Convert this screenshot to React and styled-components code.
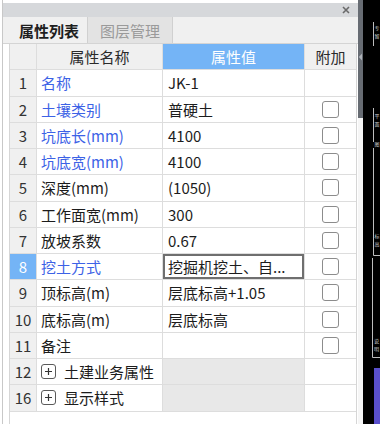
import React from 'react';
import styled, { createGlobalStyle } from 'styled-components';

const Global = createGlobalStyle`
  html, body { margin: 0; padding: 0; background: #fff; }
  body {
    width: 380px; height: 424px; overflow: hidden;
    font-family: "Noto Sans CJK SC", "Microsoft YaHei", "Noto Sans", sans-serif;
  }
  * { box-sizing: border-box; }
`;

const Screen = styled.div`
  display: flex;
  width: 380px;
  height: 424px;
  overflow: hidden;
  background: #fff;
`;

const LeftEdge = styled.div`
  flex: none;
  width: 3px;
  background: #fff;
  border-right: 1px solid #c8c8c8;
`;

const Panel = styled.div`
  flex: none;
  width: 355px;
  display: flex;
  flex-direction: column;
  padding-top: 3px;
  background: #fff;
`;

const TitleBar = styled.div`
  flex: none;
  height: 14px;
  background: #d6d8db;
  display: flex;
  justify-content: flex-end;
  align-items: center;
  padding-right: 8px;
`;

const TabRow = styled.div`
  flex: none;
  height: 27px;
  display: flex;
  background: #f0f0f0;
  border-bottom: 1px solid #d4d4d4;
`;

const Tab = styled.div`
  width: 85px;
  display: flex;
  align-items: center;
  justify-content: center;
  font-size: 15px;
  padding-left: ${p => (p.$active ? '8px' : '0')};
  border-right: 1px solid #d0d0d0;
  background: ${p => (p.$active ? '#f0f0f0' : '#e3e3e3')};
  color: ${p => (p.$active ? '#1e1e1e' : '#9a9a9a')};
  font-weight: ${p => (p.$active ? 700 : 400)};
`;

const TableArea = styled.div`
  flex: 1;
  margin-left: 6px;
  width: 348px;
  border-left: 1px solid #d6d6d6;
  border-right: 1px solid #d6d6d6;
  background: #fff;
`;

const Grid = styled.div`
  display: grid;
  grid-template-columns: 27px 126px 142px 51px;
  grid-auto-rows: 26.25px;
`;

const Cell = styled.div`
  display: flex;
  align-items: center;
  min-width: 0;
  overflow: hidden;
  white-space: nowrap;
  font-size: 15px;
  color: #1c1c1c;
  border-bottom: 1px solid #dddddd;
  border-right: ${p => (p.$last ? 'none' : '1px solid #dddddd')};
`;

const HeadCell = styled(Cell)`
  justify-content: center;
  background: ${p => (p.$accent ? '#74b4f6' : '#f0f0f0')};
  color: ${p => (p.$accent ? '#ffffff' : '#2a2a2a')};
`;

const NumCell = styled(Cell)`
  justify-content: center;
  background: ${p => (p.$active ? '#74b4f6' : '#f0f0f0')};
  color: ${p => (p.$active ? '#ffffff' : '#333333')};
`;

const NameCell = styled(Cell)`
  padding-left: 4px;
  gap: 8px;
  color: ${p => (p.$blue ? '#3c62e6' : '#1c1c1c')};
`;

const ValueCell = styled(Cell)`
  padding-left: 5px;
  background: ${p => (p.$shaded ? '#e8e8e8' : '#ffffff')};
  box-shadow: ${p => (p.$selected ? 'inset 0 0 0 2px #6f6f6f' : 'none')};
`;

const AttachCell = styled(Cell)`
  justify-content: center;
  padding-right: 1px;
`;

const CheckBox = styled.span`
  width: 17px;
  height: 17px;
  border: 1.5px solid #8c8c8c;
  border-radius: 3px;
  background: #fff;
`;

const Expander = styled.span`
  flex: none;
  width: 15px;
  height: 15px;
  border: 1px solid #5a5a5a;
  border-radius: 3px;
  display: flex;
  align-items: center;
  justify-content: center;
`;

const Splitter = styled.div`
  flex: none;
  width: 5px;
  display: flex;
  flex-direction: column;
  background: #f6f6f6;
`;

const SplitThumb = styled.div`
  height: 118px;
  background: #676c73;
  display: flex;
  align-items: flex-start;
  padding-top: 53px;
`;

const DarkPane = styled.div`
  flex: none;
  width: 17px;
  height: 424px;
  background: #000;
`;

const rows = [
  { n: '1', name: '名称', value: 'JK-1', blue: true, check: false },
  { n: '2', name: '土壤类别', value: '普硬土', blue: true, check: true },
  { n: '3', name: '坑底长(mm)', value: '4100', blue: true, check: true },
  { n: '4', name: '坑底宽(mm)', value: '4100', blue: true, check: true },
  { n: '5', name: '深度(mm)', value: '(1050)', check: true },
  { n: '6', name: '工作面宽(mm)', value: '300', check: true },
  { n: '7', name: '放坡系数', value: '0.67', check: true },
  { n: '8', name: '挖土方式', value: '挖掘机挖土、自...', blue: true, check: true, active: true },
  { n: '9', name: '顶标高(m)', value: '层底标高+1.05', check: true },
  { n: '10', name: '底标高(m)', value: '层底标高', check: true },
  { n: '11', name: '备注', value: '', check: true },
  { n: '12', name: '土建业务属性', value: '', group: true },
  { n: '16', name: '显示样式', value: '', group: true },
];

const CloseIcon = () => (
  <svg width="8" height="8" viewBox="0 0 8 8">
    <path d="M1 1 L7 7 M7 1 L1 7" stroke="#6a6a6a" strokeWidth="1.6" />
  </svg>
);

const PlusIcon = () => (
  <svg width="9" height="9" viewBox="0 0 9 9">
    <path d="M4.5 1 V8 M1 4.5 H8" stroke="#333" strokeWidth="1.2" />
  </svg>
);

const LeftArrow = () => (
  <svg width="5" height="8" viewBox="0 0 5 8">
    <path d="M4 0.5 L0.8 4 L4 7.5 Z" fill="#aeb2b8" />
  </svg>
);

const DarkContent = () => (
  <svg width="17" height="424" viewBox="0 0 17 424">
    <g stroke="#bdbdbd" strokeWidth="1" fill="none">
      <path d="M10.5 22 V46" />
      <path d="M10.5 108 V142" />
      <path d="M10.5 148 V255.5 H17" />
      <path d="M9.5 258 V357.5 H17" />
    </g>
    <g fill="#d0d0d0" fontSize="5" fontFamily="Noto Sans CJK SC, sans-serif">
      <text x="11.5" y="30">专</text>
      <text x="11.5" y="38">留</text>
      <text x="11.5" y="118">平</text>
      <text x="11.5" y="126">面</text>
      <text x="11.5" y="146">图</text>
      <text x="11.5" y="238">标</text>
      <text x="11.5" y="246">高</text>
      <text x="11" y="343">说</text>
      <text x="11" y="351">明</text>
    </g>
    <rect x="11" y="368" width="6" height="56" fill="#5a50cc" />
  </svg>
);

export default function App() {
  return (
    <>
      <Global />
      <Screen>
        <LeftEdge />
        <Panel>
          <TitleBar>
            <CloseIcon />
          </TitleBar>
          <TabRow>
            <Tab $active>属性列表</Tab>
            <Tab>图层管理</Tab>
          </TabRow>
          <TableArea>
            <Grid>
              <HeadCell />
              <HeadCell>属性名称</HeadCell>
              <HeadCell $accent>属性值</HeadCell>
              <HeadCell $last>附加</HeadCell>
              {rows.map(r => (
                <React.Fragment key={r.n}>
                  <NumCell $active={r.active}>{r.n}</NumCell>
                  <NameCell $blue={r.blue}>
                    {r.group && (
                      <Expander>
                        <PlusIcon />
                      </Expander>
                    )}
                    {r.name}
                  </NameCell>
                  <ValueCell $shaded={r.group} $selected={r.active}>
                    {r.value}
                  </ValueCell>
                  <AttachCell $last>{r.check && <CheckBox />}</AttachCell>
                </React.Fragment>
              ))}
            </Grid>
          </TableArea>
        </Panel>
        <Splitter>
          <SplitThumb>
            <LeftArrow />
          </SplitThumb>
        </Splitter>
        <DarkPane>
          <DarkContent />
        </DarkPane>
      </Screen>
    </>
  );
}
